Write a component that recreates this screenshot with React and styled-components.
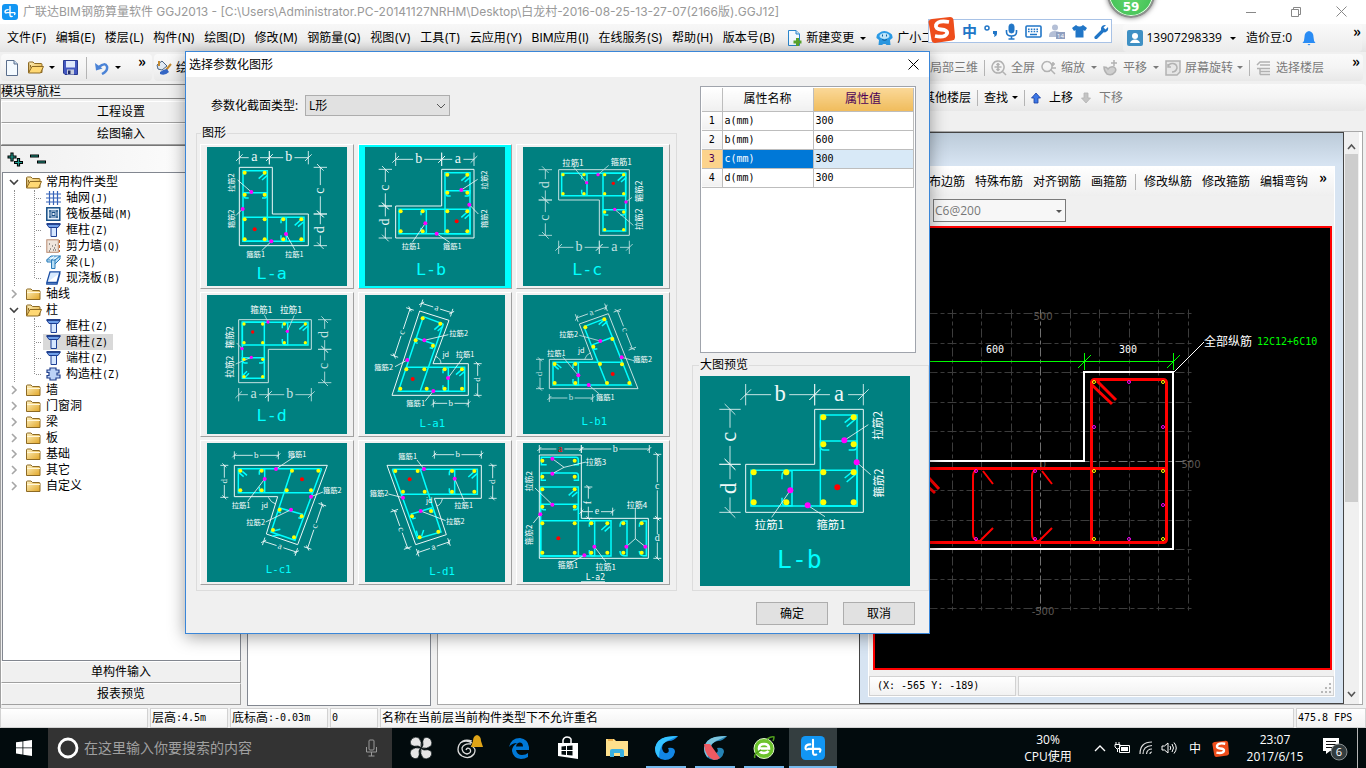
import React, { useState } from 'react'
import styled, { createGlobalStyle } from 'styled-components'

const GlobalStyle = createGlobalStyle`
  * {
    box-sizing: border-box;
  }

  body {
    margin: 0;
    font-family: "Open Sans", "Noto Sans CJK SC", sans-serif;
    font-size: 12px;
    line-height: 16px;
    color: #000;
    background: #f0f0f0;
  }

  button, input, select {
    font: inherit;
    color: inherit;
    margin: 0;
  }

  button {
    border: 0;
    padding: 0;
    background: none;
    white-space: nowrap;
  }

  svg {
    display: block;
    flex: none;
  }
`

/* ---------- shell ---------- */

const Page = styled.div`
  position: relative;
  display: flex;
  flex-direction: column;
  min-height: 100vh;
  overflow: hidden;
`

const TitleBar = styled.header`
  display: flex;
  align-items: center;
  height: 24px;
  padding: 0 15px 1px 2px;
  background: #fff;
  color: #999;
  font-family: Inter, "Noto Sans CJK SC", sans-serif;

  h1 {
    flex: 1;
    margin: 0 0 0 5px;
    font-size: 12px;
    font-weight: normal;
    white-space: nowrap;
  }
`

const WindowButtons = styled.div`
  display: flex;
  gap: 25px;
  color: #888;

  button {
    width: 20px;
    height: 20px;
    display: grid;
    place-items: center;
  }
`

const MenuBar = styled.nav`
  display: flex;
  align-items: center;
  gap: 10px;
  height: 28px;
  padding: 0 4px 0 7px;
  background: linear-gradient(#f7f7f7, #f0f0f0 60%, #e4e4e4);
`

const MenuItems = styled.div`
  display: flex;
  gap: 9px;
  padding-right: 2px;
  font-family: Inter, "Noto Sans CJK SC", sans-serif;
`

const MenuAccount = styled.div`
  display: flex;
  align-items: center;
  gap: 10px;
  height: 28px;
  margin-left: auto;
  padding-left: 4px;
  border-radius: 4px;
  background: linear-gradient(#fafafa, #ececec);
`

const IconButton = styled.button`
  display: flex;
  align-items: center;
  gap: ${p => p.$gap || 4}px;
  color: ${p => (p.$off ? '#7a7a7a' : '#000')};
`

const Caret = styled.i`
  flex: none;
  width: 0;
  height: 0;
  margin-left: ${p => p.$gap ?? 1}px;
  border: 3px solid transparent;
  border-top-color: currentColor;
  border-bottom: 0;
`

const More = styled.button`
  align-self: flex-start;
  width: 10px;
  margin-top: ${p => p.$top || 0}px;
  font-family: "Noto Sans CJK SC", sans-serif;
  font-size: 15px;
  line-height: 14px;
  font-weight: bold;
`

const Divider = styled.i`
  width: 1px;
  height: ${p => p.$h || 16}px;
  margin: 0 ${p => (p.$tight ? -2 : 0)}px;
  background: #b4b4b4;
`

const ToolRow = styled.div`
  display: flex;
  gap: 2px;
  height: 30px;
  padding: 2px 3px 1px 1px;
`

const ToolStrip = styled.div`
  display: flex;
  align-items: center;
  justify-content: ${p => (p.$end ? 'flex-end' : 'flex-start')};
  gap: ${p => p.$gap || 8}px;
  flex: ${p => (p.$grow ? 1 : 'none')};
  height: 27px;
  padding: ${p => p.$pad || '0 4px'};
  border-radius: 4px;
  background: linear-gradient(#fafafa, #f4f4f4 50%, #e8e8e8);
`

const Work = styled.main`
  flex: 1;
  display: flex;
  margin-top: 2px;
`

/* ---------- module navigator ---------- */

const Navigator = styled.aside`
  display: flex;
  flex-direction: column;
  width: 241px;
  padding-bottom: 3px;
  border-left: 1px solid #a0a0a0;

  h2 {
    margin: 0 0 2px;
    height: 15px;
    font-size: 12px;
    line-height: 13px;
    font-weight: normal;
    border: 1px solid #888;
    border-left: 0;
  }
`

const NavButton = styled.button`
  height: 22px;
  border: 1px solid #a0a0a0;
  border-top-color: #fff;
  border-left-color: #fff;
  background: #f0f0f0;
  text-align: center;
`

const NavTools = styled.div`
  display: flex;
  align-items: center;
  gap: 7px;
  height: 27px;
  padding: 0 6px;
  border-top: 1px solid #777;
  background: linear-gradient(90deg, #f0f0f0, #fff);
`

const Tree = styled.ul`
  flex: 1;
  margin: 0 0 0 1px;
  padding: 1px 0 0 6px;
  list-style: none;
  background: #fff;
  border: 1px solid #828790;

  ul {
    position: relative;
    margin: 0;
    padding: 0 0 0 27px;
    list-style: none;
  }

  ul::before {
    content: "";
    position: absolute;
    left: 5px;
    top: 0;
    bottom: 0;
    border-left: 1px dotted #909090;
  }

  ul::after {
    content: "";
    position: absolute;
    left: 25px;
    top: 0;
    bottom: 8px;
    border-left: 1px dotted #909090;
  }
`

const TreeRow = styled.button`
  display: flex;
  align-items: center;
  gap: ${p => (p.$leaf ? 2 : 7)}px;
  height: 16px;

  &::before {
    content: "";
    display: ${p => (p.$leaf ? 'block' : 'none')};
    width: 5px;
    border-top: 1px dotted #909090;
  }
`

const TreeLabel = styled.span`
  display: flex;
  align-items: center;
  gap: ${p => (p.$leaf ? 5 : 4)}px;
  height: 16px;
  padding: 0 5px 0 ${p => (p.$leaf ? 3 : 0)}px;
  background: ${p => (p.$on ? '#d9d9d9' : 'transparent')};
`

const Mono = styled.span`
  font-family: "DejaVu Sans Mono", monospace;
  font-size: 10px;
`

/* ---------- document area ---------- */

const ListPane = styled.section`
  width: 184px;
  margin: 0 0 2px 6px;
  background: #fff;
  border: 1px solid #828790;
`

const Documents = styled.section`
  position: relative;
  flex: 1;
  display: flex;
  flex-direction: column;
  margin-left: 6px;
`

const Desk = styled.div`
  flex: 1;
  display: flex;
  justify-content: flex-end;
  margin: 20px 3px 3px 0;
  background: #fff;
  border: 1px solid #a8a8a8;
`

const ScrollBar = styled.div`
  display: flex;
  flex-direction: column;
  align-items: center;
  width: 15px;
  margin-right: 3px;
  padding: 11px 0 6px;
  background: #f0f0f0;

  i {
    width: 13px;
    height: 348px;
    margin: 4px 0 auto;
    background: #cdcdcd;
  }
`

const EditorWindow = styled.section`
  display: flex;
  flex-direction: column;
  width: 485px;
  padding: 33px 8px 6px;
  border: 1px solid #444;
  background: linear-gradient(#bccbd9, #d7e4f2 32px);
`

const EditorBody = styled.div`
  flex: 1;
  display: flex;
  flex-direction: column;
  background: #f0f0f0;
  border: 1px solid #fff;
`

const EditorTools = styled.div`
  display: flex;
  align-items: center;
  justify-content: flex-end;
  gap: 10px;
  height: 29px;
  padding-right: 6px;
  background: linear-gradient(#fff, #efefef);
`

const EditorCombo = styled.div`
  display: flex;
  height: 30px;
  padding: 3px 0 0 64px;
`

const Combo = styled.div`
  position: relative;
  width: ${p => p.$w}px;

  select {
    width: 100%;
    height: ${p => p.$h}px;
    padding: 0 ${p => (p.$flat ? 1 : 3)}px;
    appearance: none;
    border: 1px solid ${p => (p.$flat ? '#7a7a7a' : '#adadad')};
    border-radius: 0;
    color: ${p => (p.$flat ? '#777' : '#000')};
    background: ${p => (p.$flat ? '#f7f7f7' : '#e1e1e1')};
  }

  svg, i {
    position: absolute;
    right: 4px;
    top: 50%;
    margin-top: -4px;
    pointer-events: none;
  }

  i {
    margin-top: -3px;
    color: #555;
  }
`

const Canvas = styled.div`
  flex: 1;
  display: flex;
  justify-content: flex-end;
  margin: 0 2px 6px 4px;
  background: #000;
  border: 2px solid #f00;
`

const StatusCells = styled.div`
  display: flex;
  gap: 2px;
  height: 20px;
`

const StatusCell = styled.span`
  display: flex;
  align-items: center;
  width: ${p => (p.$w ? `${p.$w}px` : 'auto')};
  flex: ${p => (p.$w ? 'none' : 1)};
  padding-left: ${p => p.$pad || 1}px;
  border: 1px solid #d2d2d2;
  background: linear-gradient(#fff, #f2f2f2);
  white-space: pre;
`

const Grip = styled.svg`
  align-self: flex-end;
  margin: 0 1px 1px auto;
`

const AppStatus = styled.footer`
  height: 20px;
`

/* ---------- dialog ---------- */

const Dialog = styled.section`
  position: absolute;
  left: 185px;
  top: 51px;
  width: 745px;
  border: 1px solid #3a86d8;
  background: #f0f0f0;
  box-shadow: 0 3px 16px rgba(0, 0, 0, .38);
`

const DialogTitle = styled.div`
  display: flex;
  align-items: center;
  justify-content: space-between;
  height: 25px;
  padding: 0 10px 0 3px;
  background: #fff;

  h2 {
    margin: 0;
    font-size: 12px;
    font-weight: normal;
  }
`

const DialogBody = styled.div`
  display: grid;
  grid-template-columns: 481px 1fr;
  column-gap: 15px;
  padding-left: 10px;
`

const TypeRow = styled.div`
  display: flex;
  align-items: center;
  gap: 7px;
  height: 21px;
  margin: 18px 0 9px 15px;

  label {
    width: 87px;
    white-space: nowrap;
  }
`

const Group = styled.fieldset`
  margin: 0;
  padding: ${p => p.$pad};
  border: 1px solid #dcdcdc;

  legend {
    height: 16px;
    margin-left: ${p => p.$legend}px;
    padding: 0 1px;
  }
`

const Shapes = styled.div`
  display: grid;
  grid-template-columns: repeat(3, 154px);
  gap: 3px 4px;
`

const ShapeButton = styled.button`
  display: flex;
  justify-content: center;
  padding: 2px 6px;
  border: 1px solid;
  border-color: #fff #a0a0a0 #a0a0a0 #fff;
  background: ${p => (p.$on ? '#0ff' : '#f0f0f0')};
`

const PropertyPane = styled.div`
  width: 216px;
  height: 267px;
  margin: 9px 0 4px 8px;
  padding: 1px;
  border: 1px solid #a0a4ac;
  background: #fff;
`

const PropertyTable = styled.table`
  width: 211px;
  table-layout: fixed;
  border-collapse: collapse;

  th, td {
    height: 19px;
    padding: 0 2px;
    border: 1px solid #bdbdbd;
    border-left: 0;
    font-weight: normal;
    text-align: left;
    line-height: 16px;
  }

  th {
    padding: 0;
    text-align: center;
    background: linear-gradient(#fff, #f0f0f0);
  }

  thead th {
    height: 23px;
    border-top: 0;
  }

  thead th:last-child {
    color: #4c0058;
    background: linear-gradient(#fad898, #f0bc5c);
  }
`

const PropertyRow = styled.tr`
  th {
    color: ${p => (p.$on ? '#4c0058' : '#000')};
    background: ${p => (p.$on ? '#fcd38c' : 'linear-gradient(#fff, #f0f0f0)')};
  }

  td:nth-child(2) {
    color: ${p => (p.$on ? '#fff' : '#000')};
    background: ${p => (p.$on ? '#0078d7' : '#fff')};
  }

  td:nth-child(3) {
    background: ${p => (p.$on ? '#d8e9f7' : '#fff')};
  }
`

const DialogActions = styled.div`
  display: flex;
  justify-content: flex-end;
  gap: 15px;
  padding: 11px 14px 8px;

  button {
    width: 72px;
    height: 23px;
    border: 1px solid #adadad;
    background: #e1e1e1;
  }
`

/* ---------- floating widgets ---------- */

const ImeBar = styled.div`
  position: absolute;
  top: 19px;
  right: 254px;
  display: flex;
  align-items: center;
  gap: 7px;
  height: 24px;
  padding: 0 2px 0 33px;
  border: 1px solid #a8c2e6;
  background: #fff;
  color: #2176c7;

  > svg:first-child {
    position: absolute;
    left: -1px;
    top: -4px;
  }

  b {
    font-size: 15px;
    line-height: 20px;
  }
`

const SpeedBall = styled.div`
  position: absolute;
  top: -30px;
  right: 211px;
  width: 48px;
  height: 48px;
  padding-top: 27px;
  border: 2px solid #8f8f8f;
  border-radius: 50%;
  background: radial-gradient(circle at 50% 60%, #5fd56c, #37b84c);
  box-shadow: 0 0 5px rgba(0, 0, 0, .5), inset 0 0 0 1px #e8ffe8;
  color: #fff;
  font: bold 12px/16px "DejaVu Sans", sans-serif;
  text-align: center;
`

/* ---------- taskbar ---------- */

const TaskBar = styled.footer`
  display: flex;
  align-items: stretch;
  height: 40px;
  background: #020b0d;
  color: #fff;
`

const StartButton = styled.button`
  display: grid;
  place-items: center;
  width: 48px;
`

const SearchBox = styled.label`
  display: flex;
  align-items: center;
  gap: 5px;
  width: 344px;
  padding: 0 14px 0 9px;
  background: #333;

  input {
    flex: 1;
    min-width: 0;
    padding: 0;
    border: 0;
    background: none;
    font-size: 14px;
    line-height: 20px;
    color: #fff;
  }

  input::placeholder {
    color: #a0a0a0;
    opacity: 1;
  }
`

const TaskApps = styled.div`
  display: flex;
  gap: 1px;
  margin: 0 auto 0 5px;
`

const TaskApp = styled.button`
  display: grid;
  place-items: center;
  width: 48px;
  background-color: ${p => (p.$on ? '#343e40' : 'transparent')};
  background-image: ${p => (p.$open ? 'linear-gradient(#76b9ed, #76b9ed)' : 'none')};
  background-repeat: no-repeat;
  background-position: bottom center;
  background-size: ${p => (p.$on ? 48 : 40)}px 2px;
`

const Tray = styled.div`
  display: flex;
  align-items: center;
  gap: 8px;
`

const TrayText = styled.div`
  width: ${p => p.$w}px;
  text-align: center;
  line-height: 17px;
`

/* ---------- section drawings ---------- */

const rect = (x1, y1, x2, y2) => `M${x1},${y1}H${x2}V${y2}H${x1}Z`
const hook = (x, y) => `M${x - 18},${y + 18}l18,-16M${x - 8},${y + 22}l16,-14`
const tieV = (x, y1, y2) => `M${x - 16},${y1 + 18}v-8q0,-7 8,-9h8V${y2 - 1}h-8q-8,-2 -8,-9v-8`
const tieH = (x1, x2, y) => `M${x1 + 16},${y + 16}h-8q-8,0 -8,-16H${x2}q0,16 -8,16h-8`

// dims: [x1, y1, x2, y2, letter, rotation]; labels: [x, y, text, rotation]
const SHAPES = [
  {
    name: 'L-a', origin: [36, 201], title: [230, 580], dim: 42, text: 22,
    outline: '133,262 232,262 232,402 340,402 340,497 133,497',
    bars: [rect(144, 272, 217, 484), rect(144, 412, 327, 484), tieH(145, 217, 338), tieV(274, 412, 484), hook(209, 278), hook(317, 418)],
    yellow: [[149, 278], [209, 278], [149, 344], [209, 344], [149, 418], [209, 418], [265, 418], [319, 418], [149, 478], [209, 478], [265, 478], [319, 478]],
    magenta: [[169, 336], [143, 387], [273, 462], [229, 484]], red: [179, 448],
    leaders: 'M169,336L128,300M143,387L124,405M273,462L300,510M229,484L200,512',
    dims: [[133, 233, 223, 233, 'a', 0], [223, 233, 340, 233, 'b', 0], [376, 262, 376, 402, 'c', -90], [376, 402, 376, 497, 'd', -90]],
    labels: [[182, 523, '箍筋1'], [298, 523, '拉筋1'], [110, 308, '拉筋2', -90], [110, 417, '箍筋2', -90]],
  },
  {
    name: 'L-b', origin: [510, 201], title: [708, 568], dim: 42, text: 22,
    outline: '740,268 837,268 837,474 602,474 602,378 740,378',
    bars: [rect(750, 278, 825, 461), rect(612, 388, 825, 461), tieH(751, 825, 332), tieV(694, 388, 461), hook(817, 284), hook(817, 394)],
    yellow: [[757, 284], [817, 284], [757, 338], [817, 338], [617, 394], [683, 394], [757, 394], [817, 394], [617, 454], [683, 454], [757, 454], [817, 454]],
    magenta: [[799, 330], [823, 374], [691, 430], [725, 461]], red: [785, 424],
    leaders: 'M799,330L848,298M823,374L850,402M691,430L652,487M725,461L764,487',
    dims: [[602, 238, 740, 238, 'b', 0], [740, 238, 837, 238, 'a', 0], [571, 268, 571, 378, 'c', -90], [571, 378, 571, 474, 'd', -90]],
    labels: [[648, 499, '拉筋1'], [772, 499, '箍筋1'], [868, 300, '拉筋2', -90], [868, 416, '箍筋2', -90]],
  },
  {
    name: 'L-c', origin: [39, 201], title: [232, 567], dim: 42, text: 25, dot: 5, faded: true,
    outline: '146,269 358,269 358,466 268,466 268,360 146,360',
    bars: [rect(155, 280, 347, 347), rect(279, 280, 347, 453), tieH(279, 347, 389), tieV(231, 280, 347), hook(341, 284)],
    yellow: [[159, 284], [222, 284], [284, 284], [341, 284], [159, 341], [222, 341], [284, 341], [341, 341], [284, 396], [341, 396], [284, 449], [341, 449]],
    magenta: [[264, 284], [230, 308], [348, 366], [314, 388]], red: [310, 310],
    leaders: 'M264,284L296,256M230,308L190,260M348,366L366,352M314,388L370,436',
    dims: [[106, 269, 106, 360, 'd', -90], [106, 360, 106, 466, 'c', -90], [146, 502, 268, 502, 'b', 0], [268, 502, 358, 502, 'a', 0]],
    labels: [[189, 248, '拉筋1'], [334, 247, '箍筋1'], [386, 334, '箍筋2', -90], [386, 418, '拉筋2', -90]],
  },
  {
    name: 'L-d', origin: [36, 21], title: [230, 382], dim: 42, text: 26, dot: 5, faded: true,
    outline: '131,95 349,95 349,184 220,184 220,284 131,284',
    bars: [rect(142, 103, 339, 171), rect(142, 103, 208, 271), tieH(142, 208, 209), tieV(278, 103, 171), hook(331, 106), 'M148,270l14,-14M144,262l12,-12'],
    yellow: [[147, 108], [203, 108], [268, 108], [331, 108], [147, 164], [203, 164], [268, 164], [331, 164], [147, 214], [203, 214], [147, 266], [203, 266]],
    magenta: [[219, 102], [277, 130], [141, 182], [169, 208]], red: [173, 132],
    leaders: 'M219,102L208,80M277,130L298,82M141,182L125,165M169,208L122,228',
    dims: [[389, 95, 389, 184, 'd', -90], [389, 184, 389, 284, 'c', -90], [131, 320, 220, 320, 'a', 0], [220, 320, 349, 320, 'b', 0]],
    labels: [[199, 67, '箍筋1'], [288, 67, '拉筋1'], [106, 148, '箍筋2', -90], [106, 236, '拉筋2', -90]],
  },
  {
    name: 'L-a1', origin: [510, 21], title: [712, 404], titleSize: 32, dim: 27, text: 22,
    outline: '674,69 762,97 714,227 820,227 820,322 591,322',
    bars: ['M745,108L685,86L610,310H809V238H634', 'M745,108L676,308', 'M668,166l-8,-3l4,-13l52,18l-4,13l-8,-2', tieV(760, 238, 310), hook(736, 107), hook(801, 242)],
    yellow: [[683, 91], [736, 107], [662, 157], [714, 173], [634, 244], [688, 244], [749, 244], [801, 244], [616, 302], [695, 302], [749, 302], [801, 302]],
    magenta: [[688, 157], [637, 216], [759, 270], [715, 309]], red: [653, 273],
    leaders: 'M688,157L760,140M637,216L600,236M759,270L803,210M715,309L690,340M722,205Q738,212 738,227',
    dims: [[680, 46, 770, 74, 'a', 18], [645, 63, 598, 204, 'c', -72], [848, 227, 848, 322, 'd', -90], [715, 346, 820, 346, 'b', 0]],
    labels: [[791, 136, '拉筋2'], [566, 239, '箍筋2'], [810, 198, '拉筋1'], [662, 345, '箍筋1'], [752, 200, 'jd']],
  },
  {
    name: 'L-b1', origin: [39, 21], title: [253, 400], titleSize: 32, dim: 27, text: 22, faded: true,
    outline: '118,214 248,214 208,108 295,77 384,302 118,302',
    bars: ['M222,116L285,92L364,291H129V223H336', 'M222,116L289,285', 'M262,182l-8,2l-5,-14l58,-22l5,12', tieV(205, 223, 291), 'M132,232l14,12M140,228l14,12', hook(284, 92)],
    yellow: [[226, 118], [283, 94], [307, 153], [250, 176], [134, 228], [196, 228], [270, 228], [336, 229], [134, 285], [196, 285], [291, 285], [358, 285]],
    magenta: [[271, 159], [205, 262], [335, 208], [236, 291]], red: [308, 258],
    leaders: 'M271,159L208,142M205,262L158,206M335,208L372,218M236,291L268,318M242,194Q228,200 224,214',
    dims: [[200, 90, 288, 58, 'a', -20], [322, 68, 367, 182, 'c', 68], [90, 214, 90, 302, 'd', -90], [118, 330, 248, 330, 'b', 0]],
    labels: [[176, 139, '拉筋2'], [139, 195, '拉筋1'], [398, 214, '箍筋2'], [286, 328, '箍筋1'], [214, 187, 'jd']],
  },
  {
    name: 'L-c1', origin: [36, 465], title: [251, 843], titleSize: 32, dim: 27, text: 22,
    outline: '118,532 397,532 308,770 214,738 248,626 118,626',
    bars: ['M380,542H130V614H354', 'M380,542L300,757L228,732L291,542', 'M258,674l-8,-2l4,-12l68,19l-4,12l-8,-2', tieV(209, 542, 614), 'M132,554l14,12M142,550l14,12', 'M232,744l22,-4M238,728l18,-4'],
    yellow: [[136, 548], [200, 548], [291, 548], [370, 548], [136, 607], [200, 607], [275, 607], [348, 607], [254, 665], [320, 685], [234, 726], [297, 748]],
    magenta: [[243, 543], [209, 573], [348, 626], [288, 665]], red: [321, 574],
    leaders: 'M243,543L300,505M209,573L158,640M348,626L384,612M288,665L212,702M220,628Q228,644 242,648',
    dims: [[118, 502, 250, 502, 'b', 0], [88, 532, 88, 628, 'd', -90], [206, 760, 304, 792, 'a', 18], [382, 650, 338, 780, 'c', -70]],
    labels: [[306, 499, '箍筋1'], [138, 651, '拉筋1'], [412, 608, '箍筋2'], [182, 704, '拉筋2'], [209, 652, 'jd']],
  },
  {
    name: 'L-d1', origin: [510, 465], title: [741, 848], titleSize: 32, dim: 27, text: 22,
    outline: '576,532 859,532 859,631 718,631 754,740 662,770',
    bars: ['M592,544H847V619H620', 'M592,544L667,752L738,732L676,544', 'M662,690l-8,2l-5,-14l60,-18l5,14', tieV(779, 544, 619), hook(838, 549), 'M668,744l-4,-16M680,744l6,-18'],
    yellow: [[601, 549], [668, 549], [771, 549], [838, 549], [624, 611], [689, 611], [771, 611], [838, 611], [651, 685], [708, 669], [674, 748], [730, 731]],
    magenta: [[687, 543], [779, 572], [624, 629], [677, 669]], red: [644, 574],
    leaders: 'M687,543L666,516M779,572L808,640M624,629L580,618M677,669L752,698M742,633Q738,650 726,654',
    dims: [[718, 500, 859, 500, 'b', 0], [893, 532, 893, 631, 'd', -90], [598, 668, 638, 780, 'c', 70], [668, 794, 762, 762, 'a', -18]],
    labels: [[638, 506, '箍筋1'], [552, 616, '箍筋2'], [806, 653, '拉筋1'], [781, 700, '拉筋2'], [703, 637, 'jd']],
  },
  {
    name: 'L-a2', origin: [39, 465], title: [256, 867], titleSize: 24, plain: true, dim: 30, text: 24, dot: 6,
    outline: '88,501 214,501 214,691 415,691 415,811 88,811',
    bars: ['M110,530H94V508H198q7,0 7,8v14h-14', 'M108,577H94V555H198q7,0 7,8v14h-14', rect(92, 597, 205, 804), rect(92, 698, 303, 804), tieH(92, 205, 649), tieV(254, 698, 804), hook(194, 604), hook(292, 708), 'M330,716q0,-17 12,-17h9v104h-9q-12,0 -12,-14', 'M388,716q0,-17 12,-17h9v104h-9q-12,0 -12,-14'],
    yellow: [[97, 518], [194, 518], [97, 566], [194, 566], [97, 604], [194, 604], [97, 656], [194, 656], [97, 706], [194, 706], [244, 706], [292, 706], [340, 706], [395, 706], [97, 794], [194, 794], [244, 794], [292, 794], [340, 794], [395, 794]],
    magenta: [[127, 512], [127, 557], [127, 650], [91, 679], [253, 776], [223, 802], [349, 776], [406, 776]], red: [145, 751],
    leaders: 'M127,512L162,538L127,557M162,538L228,522M127,650L75,600M91,679L70,705M253,776L288,822M223,802L180,825M349,776L376,752L406,776M376,752V660M213,881H285',
    dims: [[88, 483, 214, 483, 'a', 0, '#f00'], [214, 483, 418, 483, 'b', 0], [442, 499, 442, 691, 'c', 0], [442, 691, 442, 811, 'd', 0], [235, 597, 235, 691, 'f', -90], [214, 671, 308, 671, 'e', 0]],
    labels: [[258, 522, '拉筋3'], [381, 651, '拉筋4'], [287, 836, '拉筋1'], [174, 832, '箍筋1'], [57, 580, '拉筋2', -90], [57, 740, '箍筋2', -90]],
  },
]

const PREVIEW = {
  name: 'L-b', origin: [570, 264], box: [630, 630], title: [868, 812], titleSize: 74, dim: 68, text: 34, dot: 9, tick: 32,
  outline: '914,364 1060,364 1060,673 707,673 707,529 914,529',
  bars: [rect(931, 381, 1041, 654), rect(723, 547, 1041, 654), 'M958,486h-16q-11,0 -11,-12v-15h110v15q0,12 -11,12h-14', 'M816,574v-10q0,-14 12,-16h18V653h-18q-12,0 -12,-12v-12', 'M1004,404l22,-18M1010,416l30,-26M1004,570l22,-18M1010,582l30,-26'],
  yellow: [[940, 388], [1031, 388], [940, 469], [1031, 469], [731, 553], [829, 553], [940, 553], [1031, 553], [731, 643], [829, 643], [940, 643], [1031, 643]],
  magenta: [[1003, 457], [1040, 523], [841, 607], [893, 652]], red: [982, 598],
  leaders: 'M1003,457L1075,410M1040,523L1082,560M841,607L785,688M893,652L945,686',
  dims: [[707, 320, 914, 320, 'b', 0], [914, 320, 1060, 320, 'a', 0], [660, 364, 660, 529, 'c', -90], [660, 529, 660, 673, 'd', -90]],
  labels: [[778, 710, '拉筋1'], [963, 710, '箍筋1'], [1104, 412, '拉筋2', -90], [1106, 585, '箍筋2', -90]],
}

const Dimension = ({ x1, y1, x2, y2, label, rotation, size, tick, color }) => {
  const len = Math.hypot(x2 - x1, y2 - y1)
  const angle = (Math.atan2(y2 - y1, x2 - x1) * 180) / Math.PI
  const s = tick / 2
  const gap = size * 0.4
  const mark = x => `M${x},${-tick}V${tick}M${x - s},${s}L${x + s},${-s}`
  const cx = (x1 + x2) / 2
  const cy = (y1 + y2) / 2

  return (
    <g>
      <path
        transform={`translate(${x1} ${y1}) rotate(${angle})`}
        d={`M0,0H${len / 2 - gap}M${len / 2 + gap},0H${len}${mark(0)}${mark(len)}`}
      />
      <text
        x={cx} y={cy} fontSize={size} transform={`rotate(${rotation} ${cx} ${cy})`}
        fill={color} stroke="none" dy={size * 0.27}
        textAnchor="middle" fontFamily="Liberation Serif, serif"
      >
        {label}
      </text>
    </g>
  )
}

const SectionDrawing = ({ shape, width, height }) => {
  const [w, h] = shape.box || [420, 417]
  const dot = shape.dot || 6
  const ink = shape.faded ? '#c4e2e2' : '#eef8f8'
  const titleSize = shape.titleSize || 50

  return (
    <svg width={width} height={height} viewBox={`${shape.origin[0]} ${shape.origin[1]} ${w} ${h}`}>
      <rect x={shape.origin[0]} y={shape.origin[1]} width={w} height={h} fill="#008080" />
      <g fill="none" stroke={ink} strokeWidth="3">
        <polygon points={shape.outline} />
        <g strokeWidth="2.5">
          {shape.dims.map(([x1, y1, x2, y2, label, rotation, color], i) => (
            <Dimension
              key={i} x1={x1} y1={y1} x2={x2} y2={y2} label={label} rotation={rotation}
              color={color || ink} size={shape.dim} tick={shape.tick || (shape.dim > 30 ? 20 : 12)}
            />
          ))}
        </g>
      </g>
      <g fill="none" stroke="#0ff" strokeWidth="4.5">
        {shape.bars.map((d, i) => <path key={i} d={d} />)}
      </g>
      <path d={shape.leaders} fill="none" stroke={ink} strokeWidth="2.5" />
      {shape.yellow.map(([x, y], i) => <circle key={i} cx={x} cy={y} r={dot} fill="#ff0" />)}
      {shape.magenta.map(([x, y], i) => <circle key={i} cx={x} cy={y} r={dot} fill="#f0f" />)}
      <circle cx={shape.red[0]} cy={shape.red[1]} r={dot} fill="#f00" />
      {shape.labels.map(([x, y, label, rotation], i) => (
        <text
          key={i} x={x} y={y} dy={shape.text * 0.36} fontSize={shape.text} fill="#fff" textAnchor="middle"
          fontFamily="Noto Sans CJK SC, sans-serif"
          transform={rotation ? `rotate(${rotation} ${x} ${y})` : undefined}
        >
          {label}
        </text>
      ))}
      <text
        x={shape.title[0]} y={shape.title[1]} dy={titleSize * 0.36} fontSize={titleSize}
        fill={shape.plain ? '#fff' : '#0ff'} textAnchor="middle" fontFamily="DejaVu Sans Mono, monospace"
      >
        {shape.name}
      </text>
    </svg>
  )
}

const GRID_X = [922, 952, 981, 1011, 1070, 1099, 1129, 1158, 1188]
const GRID_Y = [313, 343, 372, 402, 431, 490, 520, 549, 579, 608]
const RED_BARS = [[976, 471], [1035, 471], [976, 539], [1035, 539], [1129, 382], [1094, 427], [1163, 427], [1163, 505], [1129, 539]]
const CORNER_BARS = [[1094, 382], [1163, 382], [1094, 471], [1163, 471], [1094, 539], [1163, 539]]

const SectionCanvas = () => (
  <svg width="453" height="437" viewBox="877 228 453 437" fontFamily="DejaVu Sans Mono, monospace" fontSize="10">
    <g stroke="#3c3c3c" strokeDasharray="9 3 4 3" transform="translate(.5 .5)">
      {GRID_X.map(x => <path key={x} d={`M${x},309V612`} />)}
      {GRID_Y.map(y => <path key={y} d={`M890,${y}H1192`} />)}
      <path d="M1040,309V612M890,461H1192" stroke="#707070" />
    </g>
    <g fill="#5c5753" textAnchor="middle" fontFamily="DejaVu Sans" fontSize="10">
      <text x="1043" y="320">500</text>
      <text x="1191" y="468">500</text>
      <text x="1043" y="468">0</text>
      <text x="1043" y="615">-500</text>
    </g>
    <g fill="none" stroke="#0f0">
      <path d="M874,361.5H1173.5M1084.5,353V370M1173.5,353V370" />
      <path d="M1078,368L1091,355M1167,368L1180,355" />
    </g>
    <path d="M874,461H1084V372H1173V549H874" fill="none" stroke="#fff" strokeWidth="2" />
    <path d="M1174,372L1204,342" stroke="#fff" />
    <g fill="none" stroke="#f00" strokeWidth="3">
      <rect x="1091.5" y="379.5" width="75" height="163" rx="3" />
      <path d="M874,468.5H1167M874,542.5H1160M1092,385L1112,404M1097,381L1116,400M928,477L939,489M926,485L935,493" />
      <path d="M983,471L993,484M976,470q-3,2 -3,6v58q0,6 5,7h2L993,528M1042,471L1052,484M1035,470q-3,2 -3,6v58q0,6 5,7h2L1052,528" strokeWidth="2" />
    </g>
    <g fill="none" stroke="#f0f">{RED_BARS.map(([x, y]) => <circle key={`${x}-${y}`} cx={x} cy={y} r="1.5" />)}</g>
    <g fill="none" stroke="#ff0">{CORNER_BARS.map(([x, y]) => <circle key={`${x}-${y}`} cx={x} cy={y} r="1.5" />)}</g>
    <g fill="#fff">
      <text x="986" y="353">600</text>
      <text x="1119" y="353">300</text>
      <text x="1204" y="346" fontFamily="Noto Sans CJK SC" fontSize="12">全部纵筋</text>
      <text x="1257" y="345" fill="#0f0">12C12+6C10</text>
    </g>
  </svg>
)

/* ---------- icons ---------- */

const AppLogo = ({ size = 16 }) => (
  <svg width={size} height={size} viewBox="0 0 16 16">
    <rect width="16" height="16" rx="3" fill="#1296f3" />
    <path d="M8,2.5V11Q8,13 10.2,12.400M6.200,5.600Q3,5.600 3,8Q3.200,9.600 5,8.600H12.500Q13.400,9 12.600,10.500" fill="none" stroke="#fff" strokeWidth="1.4" strokeLinecap="round" />
  </svg>
)

const NewDocIcon = ({ plus }) => (
  <svg width="15" height="16" viewBox="0 0 15 16">
    <path d="M1.5,.5H9L12.500,4V15.500H1.500Z" fill="#f4faff" stroke={plus ? '#2a86cc' : '#5a6e8c'} />
    <path d="M9,.5V4h3.500" fill="#c6dcf2" stroke={plus ? '#2a86cc' : '#5a6e8c'} />
    {plus && <path d="M9,8h3v2.500h2.500v3H12V16H9V13.500H6.500v-3H9Z" fill="#5aa62c" />}
  </svg>
)

const FolderIcon = ({ open }) => (
  <svg width="16" height="13" viewBox="0 0 16 13">
    <defs>
      <linearGradient id="folder" x1="0" y1="0" x2="1" y2="1">
        <stop offset="0" stopColor="#fff3c4" />
        <stop offset="1" stopColor="#e0a526" />
      </linearGradient>
    </defs>
    <path d="M.5,11.5V2q0,-1 1,-1H5l1.500,1.500H13q1,0 1,1v8Z" fill="url(#folder)" stroke="#8d6a24" />
    {open
      ? <path d="M.5,12L4,5.500H15.500L12.500,12Z" fill="#ffd873" stroke="#8d6a24" />
      : <path d="M1,4.500H14" stroke="#fff6d8" />}
    {open && <path d="M.8,11V2M2.500,6.500V4" stroke="#8d6a24" />}
  </svg>
)

const SaveIcon = () => (
  <svg width="15" height="15" viewBox="0 0 15 15">
    <path d="M.5,.5H14.500V14.500H2L.5,13Z" fill="#4458c0" stroke="#2a3a90" />
    <rect x="3" y="1" width="9" height="6.5" fill="#dfe8fb" />
    <rect x="4" y="9.5" width="7" height="5" fill="#c8cede" />
    <rect x="5" y="10.5" width="2.5" height="3.5" fill="#222c66" />
  </svg>
)

const UndoIcon = () => (
  <svg width="14" height="14" viewBox="0 0 14 14">
    <path d="M4,6Q10,1 12,5.500Q13,10 7,13" fill="none" stroke="#4b83d6" strokeWidth="2.5" />
    <path d="M0,2L1,9.500L7.500,7.500Z" fill="#4b83d6" />
  </svg>
)

const BucketIcon = () => (
  <svg width="16" height="16" viewBox="0 0 16 16">
    <path d="M1,5L6,1L11,6L6,10L2,9Z" fill="#dfe9f4" stroke="#4a6484" />
    <path d="M3,1V6M15,4L10,10" stroke="#c48a30" strokeWidth="2" />
    <path d="M4,12Q8,9 11,9L13,12Q9,16 4,14Z" fill="#3466c4" />
  </svg>
)

const GrayIcon = ({ kind }) => (
  <svg width="16" height="16" viewBox="0 0 16 16" fill="none" stroke="#b2b2b2" strokeWidth="1.5">
    {kind === 'full' && <path d="M7,1a6,6 0 1 0 .1,0M7,3.5V10.500M3.500,7H10.500M11,11l4,4M5.500,5L7,3.500L8.500,5M5.500,9L7,10.500L8.500,9" />}
    {kind === 'zoom' && <path d="M6,1.500a5,5 0 1 0 .1,0M10,10l4,4M12,2v4M10,4h4M11,8h4" />}
    {kind === 'pan' && <path d="M1,7q3,0 4,2q2,-3 6,-2q3,2 1,5q-3,4 -8,2q-3,-3 -3,-7ZM11,0V6M8,3h6" fill="#cfcfcf" />}
    {kind === 'spin' && <path d="M1,1H15V12L12,15H1ZM3,7Q4,3 8,3.500Q12,4 12,8Q11,12 7,12M3,4v3h3" fill="#e6e6e6" />}
    {kind === 'floor' && <path d="M1,5L4,2H14M4,5H14M1,8.500H14M4,8.500V14.500M4,11.500H14M4,14.500H14" />}
  </svg>
)

const ArrowIcon = ({ down }) => (
  <svg width="10" height="12" viewBox="0 0 10 12">
    <path
      d={down ? 'M3,1H7V6H9.500L5,11L.5,6H3Z' : 'M3,11H7V6H9.500L5,1L.5,6H3Z'}
      fill={down ? '#c4c4c4' : '#3d78e6'} stroke={down ? '#b4b4b4' : '#1c3fa0'} strokeWidth=".8"
    />
  </svg>
)

const MascotIcon = () => (
  <svg width="17" height="16" viewBox="0 0 17 16">
    <path d="M3,3Q8,-1 14,3Q17,4 16.500,8L14,10L14.500,15H10.500L9.500,14H7.500L6,15H2.500L3,10L.5,8Q0,4 3,3Z" fill="#2b9be6" />
    <ellipse cx="8.5" cy="6" rx="5" ry="3" fill="#bfe6fb" />
    <path d="M6.500,4.500v2M10.500,4.500v2M6,9.500q2.500,2 5,0" stroke="#14629c" fill="none" />
  </svg>
)

const AvatarIcon = () => (
  <svg width="16" height="16" viewBox="0 0 16 16">
    <rect width="16" height="16" rx="2" fill="#3f90c4" />
    <circle cx="8" cy="6" r="3" fill="#fff" />
    <path d="M3,13Q4,9.500 8,9.500T13,13Z" fill="#fff" />
  </svg>
)

const BellIcon = () => (
  <svg width="14" height="15" viewBox="0 0 14 15">
    <path d="M7,0Q11.500,1 11.500,6Q11.500,10 13.500,12H.5Q2.500,10 2.500,6Q2.500,1 7,0ZM5.500,13h3l-1.500,1.500Z" fill="#2a8cf4" />
  </svg>
)

const Chevron = ({ open }) => (
  <svg width="10" height="10" viewBox="0 0 10 10" fill="none" strokeWidth="1.6">
    {open
      ? <path d="M1,3L5,7L9,3" stroke="#404040" />
      : <path d="M3,1L7,5L3,9" stroke="#a6a6a6" />}
  </svg>
)

const TreeIcon = ({ kind }) => (
  <svg width="15" height="14" viewBox="0 0 15 14">
    {kind === 'axis' && <path d="M3.500,0V14M7.500,0V14M11.500,0V14M0,3H15M0,7H15M0,11H15" stroke="#3563b8" strokeWidth="1.2" />}
    {kind === 'raft' && (
      <g fill="none" stroke="#164f86">
        <rect x=".8" y=".8" width="13" height="12.5" fill="#e6f1fb" strokeWidth="1.5" />
        <path d="M4,3V11M11,3V11M3,4H12M3,10H12" strokeWidth="1.2" />
        <rect x="6" y="5.5" width="3" height="3" />
      </g>
    )}
    {kind === 'column' && (
      <g>
        <path d="M.5,.8H14.500L12,4.500H3Z" fill="#6f9fe8" stroke="#1d3f94" />
        <path d="M5,4.500H10.500V13.500H5Z" fill="#d6e7ff" stroke="#1d3f94" />
        <path d="M1,1H14" stroke="#16327c" strokeWidth="1.5" />
      </g>
    )}
    {kind === 'wall' && (
      <g>
        <rect x=".8" y=".8" width="11.5" height="12.5" fill="#f0e6dd" stroke="#b98a70" />
        <path d="M3,5h1M6,7h1M4,10h1M8,9h1M9,11h1M7,11h1M3,12h1M9,6h1" stroke="#444" />
        <path d="M13.500,1V13" stroke="#c46a30" strokeDasharray="3 2" />
      </g>
    )}
    {kind === 'beam' && (
      <g fill="#b9dff6" stroke="#2a7cba">
        <path d="M.5,5L5,1H14.500L10,5Z" />
        <path d="M5.500,5H9V13.500H5.500ZM9,5L14,1V4L9,9M1,5V7H5" />
        <path d="M4,4.500L8,1.500M7.500,4.500L11.500,1.500" stroke="#fff" />
      </g>
    )}
    {kind === 'slab' && <path d="M4,.8H14L11,11.500H.8Z M.8,11.500V13.200H11L14,2" fill="#d8ebff" stroke="#1d4fa4" strokeWidth="1.3" />}
    {kind === 'struct' && <path d="M4,1H10V3H13V6H11V8H14V11H10V13H4V11H1V8.500H3V5.500H1V3H4Z" fill="#bcd2f6" stroke="#203f8c" strokeWidth="1.2" />}
  </svg>
)

const CloseIcon = () => (
  <svg width="11" height="11" viewBox="0 0 11 11">
    <path d="M.5,.5L10.500,10.500M10.500,.5L.5,10.500" stroke="currentColor" />
  </svg>
)

const SogouIcon = ({ size = 27 }) => (
  <svg width={size} height={size} viewBox="0 0 27 27">
    <path d="M4,3L22,1Q25,1 25.500,4L27,21Q27,24 24,24.500L7,27Q4,27 3.500,24L.5,6Q.5,4 4,3Z" fill="#ee4d1b" />
    <path d="M21,6Q10,4 8,9Q7,13 13,13.500Q20,14 19,17.500Q17,22 7,20" fill="none" stroke="#fff" strokeWidth="3.8" />
  </svg>
)

const MicIcon = () => (
  <svg width="13" height="17" viewBox="0 0 13 17">
    <rect x="4" y="1" width="5" height="9" rx="2.5" fill="currentColor" stroke="currentColor" />
    <path d="M1.500,7v2q0,4 5,4t5,-4v-2M6.500,13v3M3.500,16h6" fill="none" stroke="currentColor" strokeWidth="1.6" />
  </svg>
)

const SwirlIcon = ({ from, to, band }) => (
  <svg width="26" height="26" viewBox="0 0 26 26">
    <path d="M25,1Q21,6 16,6Q9,7 9,13Q10,19 14,18Q17,17 15,13Q22,12 22,17Q20,25 12,25Q2,24 2,13Q4,4 13,2Q20,1 25,1Z" fill={to} />
    <path d="M25,1Q20,1 13,2Q4,4 2,13Q2,19 6,22.500Q6,10 14,6Z" fill={from} />
    {band && <path d="M2,9L8,9L18,23Q16,25 12,25Q3,22 2,9Z" fill="#ee5a62" />}
  </svg>
)

/* ---------- data ---------- */

const MENUS = ['文件(F)', '编辑(E)', '楼层(L)', '构件(N)', '绘图(D)', '修改(M)', '钢筋量(Q)', '视图(V)', '工具(T)', '云应用(Y)', 'BIM应用(I)', '在线服务(S)', '帮助(H)', '版本号(B)']

const TREE = [
  {
    label: '常用构件类型',
    items: [
      { label: '轴网', hotkey: 'J', icon: 'axis' },
      { label: '筏板基础', hotkey: 'M', icon: 'raft' },
      { label: '框柱', hotkey: 'Z', icon: 'column' },
      { label: '剪力墙', hotkey: 'Q', icon: 'wall' },
      { label: '梁', hotkey: 'L', icon: 'beam' },
      { label: '现浇板', hotkey: 'B', icon: 'slab' },
    ],
  },
  { label: '轴线' },
  {
    label: '柱',
    items: [
      { label: '框柱', hotkey: 'Z', icon: 'column' },
      { label: '暗柱', hotkey: 'Z', icon: 'column', selected: true },
      { label: '端柱', hotkey: 'Z', icon: 'column' },
      { label: '构造柱', hotkey: 'Z', icon: 'struct' },
    ],
  },
  { label: '墙' }, { label: '门窗洞' }, { label: '梁' }, { label: '板' },
  { label: '基础' }, { label: '其它' }, { label: '自定义' },
]

const PROPERTIES = [
  { name: 'a(mm)', value: '300' },
  { name: 'b(mm)', value: '600' },
  { name: 'c(mm)', value: '300' },
  { name: 'd(mm)', value: '300' },
]

/* ---------- parts ---------- */

const NavigatorPanel = () => (
  <Navigator>
    <h2>模块导航栏</h2>
    <NavButton>工程设置</NavButton>
    <NavButton>绘图输入</NavButton>
    <NavTools>
      <button aria-label="展开">
        <svg width="16" height="15" viewBox="0 0 16 15">
          <path d="M5,.5V9.500M.5,5H9.500M11.500,6V14.500M7,10.500H16" stroke="#000" strokeWidth="3.2" />
          <path d="M5,1.500V8.500M1.500,5H8.500M11.500,7V13.500M8,10.500H15" stroke="#1f9a8c" strokeWidth="1.2" />
        </svg>
      </button>
      <button aria-label="折叠">
        <svg width="16" height="15" viewBox="0 0 16 15">
          <path d="M0,4H9M7,10H16" stroke="#000" strokeWidth="3" />
          <path d="M1,4H8M8,10H15" stroke="#1f9a8c" />
        </svg>
      </button>
    </NavTools>
    <Tree>
      {TREE.map(({ label, items }) => (
        <li key={label}>
          <TreeRow>
            <Chevron open={!!items} />
            <TreeLabel><FolderIcon open={!!items} />{label}</TreeLabel>
          </TreeRow>
          {items && (
            <ul>
              {items.map(({ label: name, hotkey, icon, selected }) => (
                <li key={name}>
                  <TreeRow $leaf>
                    <TreeLabel $leaf $on={selected}>
                      <TreeIcon kind={icon} />
                      <span>{name}<Mono>({hotkey})</Mono></span>
                    </TreeLabel>
                  </TreeRow>
                </li>
              ))}
            </ul>
          )}
        </li>
      ))}
    </Tree>
    <NavButton>单构件输入</NavButton>
    <NavButton>报表预览</NavButton>
  </Navigator>
)

const Editor = () => (
  <EditorWindow>
    <EditorBody>
      <EditorTools>
        <button>布边筋</button>
        <button>特殊布筋</button>
        <button>对齐钢筋</button>
        <button>画箍筋</button>
        <Divider $tight />
        <button>修改纵筋</button>
        <button>修改箍筋</button>
        <button>编辑弯钩</button>
        <More $top={3}>»</More>
      </EditorTools>
      <EditorCombo>
        <Combo $w={133} $h={23} $flat>
          <select aria-label="钢筋信息"><option>C6@200</option></select>
          <Caret />
        </Combo>
      </EditorCombo>
      <Canvas><SectionCanvas /></Canvas>
      <StatusCells>
        <StatusCell $w={147} $pad={7}><Mono>(X: -565 Y: -189)</Mono></StatusCell>
        <StatusCell>
          <Grip width="11" height="11" viewBox="0 0 11 11" fill="#b8b8b8">
            <path d="M8,0h2v2h-2ZM8,4h2v2h-2ZM8,8h2v2h-2ZM4,4h2v2h-2ZM4,8h2v2h-2ZM0,8h2v2h-2Z" />
          </Grip>
        </StatusCell>
      </StatusCells>
    </EditorBody>
  </EditorWindow>
)

const ShapeDialog = () => {
  const [current, setCurrent] = useState('L-b')

  return (
    <Dialog role="dialog" aria-labelledby="dialog-title">
      <DialogTitle>
        <h2 id="dialog-title">选择参数化图形</h2>
        <button aria-label="关闭"><CloseIcon /></button>
      </DialogTitle>
      <DialogBody>
        <div>
          <TypeRow>
            <label htmlFor="section-type">参数化截面类型:</label>
            <Combo $w={145} $h={21}>
              <select id="section-type"><option>L形</option></select>
              <svg width="10" height="8" viewBox="0 0 10 8">
                <path d="M1,2L5,6L9,2" fill="none" stroke="#555" />
              </svg>
            </Combo>
          </TypeRow>
          <Group $pad="3px 6px 5px 3px" $legend={1}>
            <legend>图形</legend>
            <Shapes>
              {SHAPES.map(shape => (
                <ShapeButton key={shape.name} $on={shape.name === current} onClick={() => setCurrent(shape.name)}>
                  <SectionDrawing shape={shape} width={140} height={139} />
                </ShapeButton>
              ))}
            </Shapes>
          </Group>
        </div>
        <div>
          <PropertyPane>
            <PropertyTable>
              <colgroup><col width="20" /><col width="91" /><col width="100" /></colgroup>
              <thead>
                <tr><th /><th>属性名称</th><th>属性值</th></tr>
              </thead>
              <tbody>
                {PROPERTIES.map(({ name, value }, i) => (
                  <PropertyRow key={name} $on={name === 'c(mm)'}>
                    <th><Mono>{i + 1}</Mono></th>
                    <td><Mono>{name}</Mono></td>
                    <td><Mono>{value}</Mono></td>
                  </PropertyRow>
                ))}
              </tbody>
            </PropertyTable>
          </PropertyPane>
          <Group $pad="3px 7px 4px" $legend={-1}>
            <legend>大图预览</legend>
            <SectionDrawing shape={PREVIEW} width={210} height={210} />
          </Group>
          <DialogActions>
            <button>确定</button>
            <button>取消</button>
          </DialogActions>
        </div>
      </DialogBody>
    </Dialog>
  )
}

const TaskBarPanel = () => (
  <TaskBar>
    <StartButton aria-label="开始">
      <svg width="16" height="16" viewBox="0 0 16 16" fill="#fff">
        <path d="M0,2.300L6.500,1.400V7.500H0ZM7.300,1.300L16,0V7.500H7.300ZM0,8.300H6.500V14.500L0,13.600ZM7.300,8.300H16V16L7.300,14.700Z" />
      </svg>
    </StartButton>
    <SearchBox>
      <svg width="22" height="22" viewBox="0 0 22 22"><circle cx="11" cy="11" r="9" fill="none" stroke="#fff" strokeWidth="2.8" /></svg>
      <input placeholder="在这里输入你要搜索的内容" aria-label="搜索" />
      <svg width="13" height="18" viewBox="0 0 13 18" fill="none" stroke="#9a9a9a"><rect x="4" y="1" width="5" height="10" rx="1" /><path d="M1.500,8V13H11.500V8M6.500,13V17M3.500,17H9.500" /></svg>
    </SearchBox>
    <TaskApps>
      <TaskApp aria-label="风扇">
        <svg width="22" height="22" viewBox="0 0 22 22" fill="#e6e6e6">
          {[0, 90, 180, 270].map(a => <path key={a} transform={`rotate(${a} 11 11)`} d="M10.800,10.800Q12.500,5 9,1Q6,-1 2,1.500Q-1,5 1,8Q4,10 8,9Q10,9.500 10.800,10.800Z" stroke="#020b0d" strokeWidth=".7" />)}
        </svg>
      </TaskApp>
      <TaskApp aria-label="提醒">
        <svg width="28" height="28" viewBox="0 0 28 28">
          <path d="M16,7Q7,4 3,11Q0,18 6,22Q13,26 18,20Q21,14 15,12M15,10Q8,9 6,14Q6,19 11,20Q16,19 14,15Q11,13 10,16M4,9Q10,5 16,9" fill="none" stroke="#ddd" strokeWidth="1.3" />
          <path d="M21,1Q25,2 25,7L27,13H15L17,7Q17,2 21,1Z" fill="#e0a417" />
        </svg>
      </TaskApp>
      <TaskApp aria-label="浏览器">
        <svg width="22" height="22" viewBox="0 0 22 22">
          <path d="M1,10Q3,1 12,1Q20,2 21,10V13H8Q9,18 14,18Q18,18 20,16V20Q17,22 13,22Q5,21 4,14Q4,9 9,6Q4,6 1,10ZM8,9.500H15Q15,5.500 11.500,5.500Q8.500,6 8,9.500Z" fill="#0078d7" fillRule="evenodd" />
        </svg>
      </TaskApp>
      <TaskApp aria-label="商店">
        <svg width="22" height="24" viewBox="0 0 22 24">
          <path d="M1,7H21V23L1,20Z" fill="#fff" />
          <path d="M6,8V4Q7,1 10,1T14,3V7" fill="none" stroke="#fff" strokeWidth="1.5" />
          <path d="M4.500,10.500L9,10V14H4.500ZM10,10L15.500,9.500V14H10ZM4.500,15H9V19L4.500,18.500ZM10,15H15.500V19.500L10,19Z" fill="#020b0d" />
        </svg>
      </TaskApp>
      <TaskApp aria-label="文件资源管理器">
        <svg width="22" height="20" viewBox="0 0 22 20">
          <path d="M0,1H8L10,3H22V18H0Z" fill="#fde08c" />
          <path d="M2,2H7" stroke="#e8a33a" strokeWidth="1.5" />
          <path d="M4,19V13Q4,11 6,11H16Q18,11 18,13V19H14V15H8V19Z" fill="#3ab0e0" />
        </svg>
      </TaskApp>
      <TaskApp $open aria-label="广联达云"><SwirlIcon from="#35c3ff" to="#1286e4" /></TaskApp>
      <TaskApp $open aria-label="广联达助手"><SwirlIcon from="#7cc4dc" to="#2583b4" band /></TaskApp>
      <TaskApp $open aria-label="安全浏览器">
        <svg width="24" height="24" viewBox="0 0 24 24">
          <circle cx="12" cy="12.5" r="10" fill="#6cc32c" stroke="#dff5c8" />
          <path d="M7,12.500H17Q17,8 12,8T7,12.500T12,17Q15,17 16.500,15" fill="none" stroke="#fff" strokeWidth="2.6" />
          <path d="M3,22Q1,18 9,14M15,3Q20,0 22,1Q22,3 21,5" fill="none" stroke="#4f9e1c" strokeWidth="1.5" />
        </svg>
      </TaskApp>
      <TaskApp $open $on aria-label="钢筋算量软件"><AppLogo size={24} /></TaskApp>
    </TaskApps>
    <Tray>
      <TrayText $w={76}>30%<br />CPU使用</TrayText>
      <svg width="12" height="8" viewBox="0 0 12 8"><path d="M1,7L6,2L11,7" fill="none" stroke="#fff" strokeWidth="1.3" /></svg>
      <svg width="17" height="14" viewBox="0 0 17 14">
        <path d="M5.500,4.500H15.500V11.500H5.500ZM2,1V3M5,1V3M1,3.500H6V6L4,8H3L1,6ZM3.500,8V11" fill="none" stroke="#fff" />
        <rect x="7" y="6" width="7" height="4" fill="#fff" />
      </svg>
      <svg width="14" height="14" viewBox="0 0 14 14" fill="none" stroke="#ddd" strokeWidth="1.2"><path d="M1,13Q1,1 13,1M4,13Q4,5 13,4.500M7.500,13Q8,8 13,8M11,13Q11,11 13,11" /></svg>
      <svg width="17" height="14" viewBox="0 0 17 14" fill="none" stroke="#fff"><path d="M1,5H3.500L7,2V12L3.500,9H1ZM9,5Q10.500,7 9,9M11,3Q14,7 11,11M13,1.500Q17.500,7 13,12.500" /></svg>
      <TrayText $w={18}>中</TrayText>
      <SogouIcon size={17} />
      <TrayText $w={76}>23:07<br />2017/6/15</TrayText>
      <svg width="28" height="28" viewBox="0 0 28 28">
        <path d="M2,4H18V17H9L5,20V17H2Z" fill="#fff" />
        <path d="M5,7.500H15M5,10.500H15M5,13.500H11" stroke="#111" />
        <circle cx="18" cy="18" r="8" fill="#333c3e" stroke="#8a8f90" />
        <text x="18" y="22" fill="#fff" fontSize="11" textAnchor="middle">6</text>
      </svg>
      <Divider $h={40} />
      <i />
    </Tray>
  </TaskBar>
)

const Ime = () => (
  <ImeBar>
    <SogouIcon />
    <b>中</b>
    <svg width="14" height="14" viewBox="0 0 14 14"><circle cx="3" cy="4" r="2" fill="none" stroke="currentColor" strokeWidth="1.5" /><path d="M9,7h4v3q0,2 -3,3q1,-2 0,-3h-1Z" fill="currentColor" /></svg>
    <MicIcon />
    <svg width="17" height="13" viewBox="0 0 17 13">
      <rect x="1" y="1" width="15" height="11" rx="1" fill="none" stroke="currentColor" strokeWidth="1.6" />
      <path d="M3,4.200H14M3,6.500H14" stroke="currentColor" strokeWidth="1.4" strokeDasharray="1.6 1.2" /><path d="M5,9.500H12" stroke="currentColor" strokeWidth="1.5" />
    </svg>
    <svg width="16" height="15" viewBox="0 0 16 15" fill="#b4bfd6">
      <circle cx="6" cy="3.5" r="3" /><path d="M0,12Q0,7 6,7Q10,7 11,9V13H0Z" />
      <rect x="7" y="8" width="9" height="7" fill="#8f9fc0" /><text x="8" y="14" fontSize="6" fill="#fff">14</text>
    </svg>
    <svg width="15" height="14" viewBox="0 0 15 14"><path d="M4,1Q7.500,4 11,1L15,4L13,7L11.500,6V13.500H3.500V6L2,7L0,4Z" fill="currentColor" /></svg>
    <svg width="15" height="15" viewBox="0 0 15 15"><path d="M2,13.500L9,6.500" stroke="currentColor" strokeWidth="3.2" strokeLinecap="round" /><path d="M12,1L9.500,3.500L11.500,5.500L14,3Q15,7 11,8.500Q6.500,8 7,4Q8,.5 12,1Z" fill="currentColor" /></svg>
  </ImeBar>
)

const App = () => (
  <>
    <GlobalStyle />
    <Page>
      <TitleBar>
        <AppLogo />
        <h1>广联达BIM钢筋算量软件 GGJ2013 - [C:\Users\Administrator.PC-20141127NRHM\Desktop\白龙村-2016-08-25-13-27-07(2166版).GGJ12]</h1>
        <WindowButtons>
          <button aria-label="最小化"><svg width="10" height="10" viewBox="0 0 10 10"><path d="M0,5.500H10" stroke="currentColor" /></svg></button>
          <button aria-label="还原"><svg width="10" height="10" viewBox="0 0 10 10" fill="none" stroke="currentColor"><path d="M.5,2.500H7.500V9.500H.5ZM2.500,2.500V.5H9.500V7.500H7.500" /></svg></button>
          <button aria-label="关闭"><CloseIcon /></button>
        </WindowButtons>
      </TitleBar>

      <MenuBar>
        <MenuItems>
          {MENUS.map(name => <button key={name}>{name}</button>)}
        </MenuItems>
        <IconButton><NewDocIcon plus />新建变更<Caret $gap={2} /></IconButton>
        <IconButton><MascotIcon />广小二</IconButton>
        <MenuAccount>
          <IconButton><AvatarIcon />13907298339<Caret $gap={4} /></IconButton>
          <button>造价豆:0</button>
          <button aria-label="消息"><BellIcon /></button>
          <i style={{ width: 16 }} />
          <More>»</More>
        </MenuAccount>
      </MenuBar>

      <ToolRow>
        <ToolStrip $pad="0 5px 0 4px">
          <button aria-label="新建"><NewDocIcon /></button>
          <IconButton aria-label="打开"><FolderIcon open /><Caret /></IconButton>
          <button aria-label="保存"><SaveIcon /></button>
          <Divider $h={22} />
          <IconButton aria-label="撤销"><UndoIcon /><Caret $gap={2} /></IconButton>
          <i />
          <More>»</More>
        </ToolStrip>
        <ToolStrip $grow $gap={6} $pad="0 2px">
          <IconButton><BucketIcon />绘</IconButton>
          <i style={{ flex: 1 }} />
          <IconButton $off>局部三维</IconButton>
          <Divider />
          <IconButton $off><GrayIcon kind="full" />全屏</IconButton>
          <IconButton $off><GrayIcon kind="zoom" />缩放<Caret $gap={2} /></IconButton>
          <IconButton $off><GrayIcon kind="pan" />平移<Caret $gap={2} /></IconButton>
          <IconButton $off><GrayIcon kind="spin" />屏幕旋转<Caret $gap={0} /></IconButton>
          <Divider />
          <IconButton $off><GrayIcon kind="floor" />选择楼层</IconButton>
          <i style={{ width: 15 }} />
          <More>»</More>
        </ToolStrip>
      </ToolRow>

      <Work>
        <NavigatorPanel />
        <ListPane />
        <Documents>
          <ToolStrip $end $gap={8} $pad="0 243px 0 0">
            <button>其他楼层</button>
            <Divider $tight />
            <IconButton>查找<Caret $gap={0} /></IconButton>
            <Divider $tight />
            <IconButton $gap={8}><ArrowIcon />上移</IconButton>
            <IconButton $gap={8} $off><ArrowIcon down />下移</IconButton>
          </ToolStrip>
          <Desk>
            <Editor />
            <ScrollBar>
              <svg width="9" height="7" viewBox="0 0 9 7"><path d="M1,6L4.500,2L8,6" fill="none" stroke="#555" strokeWidth="1.6" /></svg>
              <i />
              <svg width="9" height="7" viewBox="0 0 9 7"><path d="M1,1L4.500,5L8,1" fill="none" stroke="#555" strokeWidth="1.6" /></svg>
            </ScrollBar>
          </Desk>
        </Documents>
      </Work>

      <AppStatus>
        <StatusCells>
          <StatusCell $w={148} />
          <StatusCell $w={78}>层高<Mono>:4.5m</Mono></StatusCell>
          <StatusCell $w={98}>底标高<Mono>:-0.03m</Mono></StatusCell>
          <StatusCell $w={48}><Mono>0</Mono></StatusCell>
          <StatusCell>名称在当前层当前构件类型下不允许重名</StatusCell>
          <StatusCell $w={70}><Mono>475.8 FPS</Mono></StatusCell>
        </StatusCells>
      </AppStatus>

      <TaskBarPanel />

      <ShapeDialog />
      <Ime />
      <SpeedBall>59</SpeedBall>
    </Page>
  </>
)

export default App
